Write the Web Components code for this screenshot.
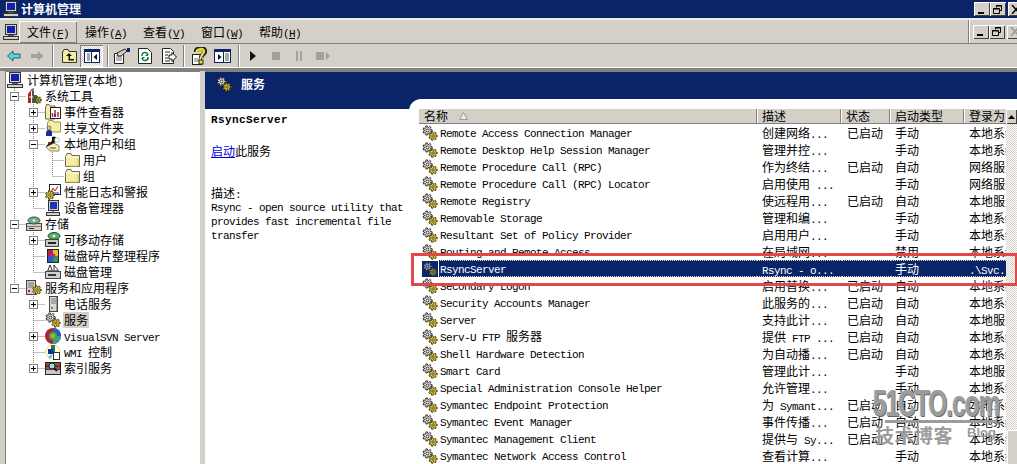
<!DOCTYPE html>
<html>
<head>
<meta charset="utf-8">
<style>
  html, body { margin: 0; height: 100%; overflow: hidden; background: #d4d0c8; }
</style>
</head>
<body>
<mmc-window>
  <title-bar slot="title" text="计算机管理"></title-bar>
  <menu-bar slot="menu"></menu-bar>
  <tool-bar slot="tools"></tool-bar>
  <tree-view slot="tree"></tree-view>
  <task-pad slot="pane"></task-pad>
</mmc-window>
<script>
const BASE_CSS = `
  :host, * { box-sizing: border-box; }
  .l { font: 11px "Liberation Mono", monospace; letter-spacing: -.6px; }
  svg { display: block; flex: none; }
`;
const CJK = '12px/14px "Noto Sans CJK SC", "Liberation Sans", sans-serif';

// latin runs get the narrow mono face, the rest stays CJK
const mix = (text) => text.replace(/[\x20-\x7e]+/g, (m) => `<span class="l">${m}</span>`);

const svg = (w, h, body) => `<svg width="${w}" height="${h}" viewBox="0 0 ${w} ${h}">${body}</svg>`;

// toothed wheel as one outline, so the teeth stay visible at 16px
const gearShape = (x, y, r, fill, edge) => {
  const pts = [];
  const teeth = 7;
  for (let k = 0; k < teeth * 2; k++) {
    const out = k % 2 === 0;
    for (const d of [-.17, .17]) {
      const a = (k * Math.PI) / teeth + d;
      const rad = out ? r + 1.1 : r - .4;
      pts.push(`${(x + rad * Math.cos(a)).toFixed(1)},${(y + rad * Math.sin(a)).toFixed(1)}`);
    }
  }
  return `<polygon points="${pts.join(' ')}" fill="${fill}" stroke="${edge}" stroke-width=".9"/>
    <circle cx="${x}" cy="${y}" r="${(r * .38).toFixed(1)}" fill="#fff" stroke="${edge}" stroke-width=".9"/>`;
};

const folderShape = `
  <path d="M1.5 4.5 V14.5 H15.5 V3.5 H8 L7 1.5 H3 L2 3.5 Z" fill="#f5ee9e" stroke="#6b6b5a"/>
  <path d="M2 5 H15" stroke="#fff"/><path d="M14 6 V14 H3" stroke="#cdbf5e" fill="none"/>`;

const ICONS = {
  gear: svg(16, 16, gearShape(5.5, 5.5, 3.6, '#dcdcdc', '#222') + gearShape(11, 11, 3.2, '#f2d431', '#3a3300')),
  computer: svg(16, 16, `
    <rect x="2.5" y=".5" width="11" height="10" fill="#d4d0c8" stroke="#333"/>
    <rect x="4" y="2" width="8" height="7" fill="#1020b0"/>
    <path d="M5 11.5H11" stroke="#555"/>
    <rect x=".5" y="12.5" width="15" height="3" fill="#d4d0c8" stroke="#333"/>`),
  tools: svg(16, 16, `
    <path d="M2 15V6L5 2V15Z" fill="#b02020"/><path d="M6 15V3H8V15Z" fill="#555"/>
    <path d="M8 15V7H11V15Z" fill="#208040"/><path d="M5 1L8 0V3H5Z" fill="#777"/>
    <path d="M3 9H7" stroke="#fff"/>` + gearShape(12, 12, 2.4, '#f2d431', '#3a3300')),
  folder: svg(16, 16, folderShape),
  event: svg(16, 16, `
    <path d="M.5 4V15H10V2H5L4 .5H1.5Z" fill="#f5ee9e" stroke="#6b6b5a"/>
    <rect x="5.5" y="3.5" width="10" height="11" fill="#fff" stroke="#222"/>
    <path d="M7.5 13V9M10 13V6M13 13V8" stroke="#b02020" stroke-width="1.4"/>
    <path d="M10 13V10" stroke="#1030a0" stroke-width="1.4"/>`),
  share: svg(16, 16, `
    <path d="M2.5 3V12H15.5V2H9L8 .5H4Z" fill="#f5ee9e" stroke="#999070"/>
    <path d="M1 13C1 10 4 10 5 10C6 10 7 11 7 13V16H1Z" fill="#1030a0"/>
    <circle cx="4" cy="8" r="2" fill="#f0c090" stroke="#333" stroke-width=".6"/>`),
  users: svg(16, 16, `
    <path d="M7 1C11 -1 12 3 11 5L7 8Z" fill="#111"/>
    <path d="M1 10L8 4L10 7L4 13Z" fill="#111"/>
    <path d="M1 11L5 15H14V10L9 7Z" fill="#eeeecc" stroke="#555" stroke-width=".7"/>
    <circle cx="12" cy="4" r="2.5" fill="#fff" stroke="#888" stroke-width=".5"/>
    <path d="M3 6L5 8M5 6L3 8" stroke="#b02020"/><path d="M5 12H11" stroke="#c0a020" stroke-width="2"/>`),
  perf: svg(16, 16, `
    <rect x="4.5" y=".5" width="11" height="10" fill="#fff" stroke="#222"/>
    <path d="M6 8L8 4L10 7L13 2" stroke="#b02020" fill="none"/><path d="M6 9H14" stroke="#1030a0"/>` +
    gearShape(5, 11, 3.4, '#f2d431', '#3a3300')),
  device: svg(16, 16, `
    <rect x="3.5" y=".5" width="10" height="10" fill="#d4d0c8" stroke="#333"/>
    <rect x="5" y="2" width="7" height="7" fill="#1038c0"/>
    <path d="M8 10.5V12" stroke="#333"/><rect x="1.5" y="12.5" width="13" height="3" fill="#d4d0c8" stroke="#333"/>`),
  storage: svg(16, 16, `
    <rect x=".5" y="7.5" width="15" height="7" fill="#d4d0c8" stroke="#444"/>
    <path d="M1 10.5H15" stroke="#777"/><rect x="3" y="12" width="5" height="1" fill="#222"/>
    <ellipse cx="8" cy="4.5" rx="6" ry="3.5" fill="#70b070" stroke="#446"/>
    <ellipse cx="8" cy="4.5" rx="1.5" ry="1" fill="#fff"/>`),
  removable: svg(16, 16, `
    <rect x=".5" y="7.5" width="13" height="7" fill="#c8c8c8" stroke="#444"/>
    <rect x="3" y="10" width="8" height="2" fill="#222"/>
    <ellipse cx="9" cy="4" rx="6" ry="3.5" fill="#58b058" stroke="#345"/>
    <ellipse cx="9" cy="4" rx="1.6" ry="1" fill="#fff"/>`),
  defrag: svg(16, 16, `
    <rect x="2" y="1" width="12" height="14" fill="#222"/>
    <rect x="3" y="2" width="5" height="6" fill="#c02040"/><rect x="8" y="2" width="5" height="6" fill="#e0c020"/>
    <rect x="3" y="8" width="5" height="6" fill="#2060d0"/><rect x="8" y="8" width="5" height="6" fill="#30a050"/>
    <circle cx="8" cy="8" r="2.4" fill="#a030a0"/>`),
  disk: svg(16, 16, `
    <rect x=".5" y="7.5" width="15" height="7" fill="#d0d0d0" stroke="#444"/>
    <rect x="3" y="10" width="8" height="2" fill="#333"/>
    <path d="M3 6L5 1L7 6M9 6V1L13 6" stroke="#333" fill="none"/><path d="M2 6.5H14" stroke="#777"/>`),
  apps: svg(16, 16, `
    <rect x=".5" y=".5" width="9" height="14" fill="#d4d0c8" stroke="#444"/>
    <path d="M2 3H8M2 5H8M2 7H8" stroke="#777"/><rect x="2" y="10" width="2" height="2" fill="#b02020"/>` +
    gearShape(11, 10, 3.3, '#f2d431', '#3a3300')),
  phone: svg(16, 16, `
    <rect x="4.5" y=".5" width="8" height="15" fill="#d8d8d8" stroke="#444"/>
    <path d="M6 3H11M6 5H11M6 7H11" stroke="#777"/><rect x="6" y="11" width="2" height="2" fill="#40a040"/>
    <path d="M11.5 1V15" stroke="#999"/>`),
  svn: svg(16, 16, `
    <circle cx="8" cy="8" r="8" fill="#b02030"/>
    <path d="M8 0A8 8 0 0 1 16 8H8Z" fill="#2060c0"/><path d="M16 8A8 8 0 0 1 8 16V8Z" fill="#30a0a0"/>
    <circle cx="8" cy="8" r="4" fill="#40a848"/><circle cx="8" cy="8" r="2" fill="#e0a030"/>`),
  wmi: svg(16, 16, `
    <circle cx="8" cy="8" r="7" fill="none" stroke="#e8e040"/>
    <rect x="6" y="1" width="4" height="8" fill="#208040"/><rect x="3" y="5" width="5" height="5" fill="#1030a0"/>
    <rect x="8.5" y="8.5" width="6" height="7" fill="#fff" stroke="#333"/>
    <path d="M4 14L7 11" stroke="#40c0e0" stroke-width="2"/>`),
  index: svg(16, 16, `
    <rect x=".5" y="2.5" width="15" height="12" fill="#a05030" stroke="#222"/>
    <path d="M1 6H15M1 10H15" stroke="#222"/><rect x="1" y="10" width="14" height="4" fill="#c8c8c8"/>
    <circle cx="7" cy="6" r="3" fill="#a0e0e0" stroke="#123"/><path d="M9 8L12 11" stroke="#123" stroke-width="2"/>`),
  back: svg(14, 12, `<path d="M.5 6L6 1V4H13V8H6V11Z" fill="#40e0e8" stroke="#333" stroke-width=".8"/>`),
  forward: svg(14, 12, `<path d="M13.5 6L8 1V4H1V8H8V11Z" fill="#a0a0a0"/>`),
  up: svg(16, 16, `
    <path d="M1.5 3.5V14.5H15.5V3.5H8L7 1.5H3L2 3.5Z" fill="#f5ee9e" stroke="#333"/>
    <path d="M8 5L11 8H9V11H13V12.5H7.5V8H5Z" fill="#111"/>`),
  tree: svg(16, 14, `
    <rect x=".5" y=".5" width="15" height="13" fill="#fff" stroke="#0a246a"/>
    <rect x="1" y="1" width="14" height="2" fill="#0a246a"/>
    <path d="M7.5 3V13" stroke="#0a246a"/><path d="M3 5H6M3 7H6M3 9H6M3 11H6" stroke="#555"/>
    <path d="M13 5V11L9.5 8Z" fill="#111"/>`),
  props: svg(18, 16, `
    <path d="M1.5 5.5H10.5V15.5H1.5Z" fill="#fff" stroke="#222"/>
    <path d="M3 8H9M3 10H9M3 12H9" stroke="#777"/>
    <path d="M4 5L12 1L14 3L8 8L5 8Z" fill="#d4d0c8" stroke="#222"/>
    <rect x="14" y="0" width="3" height="4" fill="#0a246a"/>`),
  refresh: svg(14, 16, `
    <path d="M.5 .5H9.5L13.5 4.5V15.5H.5Z" fill="#fff" stroke="#222"/>
    <path d="M4 8A3 3 0 0 1 10 7M10 9A3 3 0 0 1 4 10" stroke="#108040" fill="none" stroke-width="1.4"/>
    <path d="M10 5V8H7ZM4 12V9H7Z" fill="#108040"/>`),
  exportList: svg(15, 16, `
    <path d="M.5 .5H8.5L11.5 3.5V15.5H.5Z" fill="#fff" stroke="#222"/>
    <path d="M3 4H8M3 7H6M3 10H6M3 13H8" stroke="#222"/>
    <path d="M7 7H10V4.5L14.5 9L10 13.5V11H7Z" fill="#fff" stroke="#111"/>`),
  help: svg(15, 18, `
    <rect x=".5" y="7.5" width="9" height="10" fill="#fff" stroke="#222"/>
    <path d="M2 12H8M2 14H8" stroke="#777"/>
    <path d="M4 5C4 1 12 -1 13 4C13.500 7 9 7 9 11" stroke="#222" stroke-width="4.400" fill="none"/>
    <path d="M4.500 5C5 2 11.500 0.500 12 4C12.500 6.500 9 7 9 11" stroke="#f0e030" stroke-width="2.400" fill="none"/>
    <rect x="7" y="13" width="4" height="4" fill="#f0e030" stroke="#222"/>`),
  action: svg(17, 14, `
    <rect x=".5" y=".5" width="16" height="13" fill="#fff" stroke="#0a246a"/>
    <rect x="1" y="1" width="15" height="2" fill="#0a246a"/>
    <path d="M9.500 3V13" stroke="#0a246a"/><path d="M11 5H15M11 7H15M11 9H15M11 11H15" stroke="#555"/>
    <path d="M4 5V11L7.500 8Z" fill="#111"/>`),
  play: svg(8, 12, `<path d="M1 1V11L7 6Z" fill="#111"/>`),
  stop: svg(10, 10, `<rect x="1" y="1" width="8" height="8" fill="#a0a0a0"/>`),
  pause: svg(8, 10, `<path d="M1 0H3V10H1ZM5 0H7V10H5Z" fill="#a0a0a0"/>`),
  step: svg(15, 10, `<rect x="0" y="1" width="8" height="8" fill="#a0a0a0"/><path d="M10 1V9L14 5Z" fill="#a0a0a0"/>`),
};

class MmcIcon extends HTMLElement {
  connectedCallback() {
    if (this.shadowRoot) return;
    // white-space comes in from the rows, and would turn the markup's newlines into lines
    this.attachShadow({ mode: 'open' }).innerHTML = `
      <style>:host { display: block; flex: none; white-space: normal; width: max-content; } svg { display: block; }</style>
      ${ICONS[this.getAttribute('name')]}
    `;
  }
}

class WinButtons extends HTMLElement {
  connectedCallback() {
    if (this.shadowRoot) return;
    this.attachShadow({ mode: 'open' }).innerHTML = `
      <style>
        ${BASE_CSS}
        :host { display: flex; flex: none; }
        b {
          width: 16px; height: 14px; background: #d4d0c8; display: flex; align-items: center; justify-content: center;
          box-shadow: inset 1px 1px 0 #fff, inset -1px -1px 0 #404040;
        }
        b:last-child { margin-left: 2px; }
      </style>
      <b>${svg(10, 9, '<rect x="1" y="7" width="6" height="2" fill="#000"/>')}</b>
      <b>${svg(10, 9, '<path d="M3.500 2.500V.5H8.500V5.500H6.500M.5 3.500H6.500V8.500H.5Z" fill="none" stroke="#000"/><path d="M3 1H9M0 4H6" stroke="#000"/>')}</b>
      <b>${svg(10, 9, `<path d="M1 0L9 9M9 0L1 9" stroke="${this.hasAttribute('dim') ? '#9a9a9a' : '#000'}" stroke-width="1.500"/>`)}</b>
    `;
  }
}

class TitleBar extends HTMLElement {
  connectedCallback() {
    if (this.shadowRoot) return;
    this.attachShadow({ mode: 'open' }).innerHTML = `
      <style>
        ${BASE_CSS}
        :host {
          display: flex; align-items: center; height: 18px; background: #0a246a; color: #fff; flex: none;
          padding-left: 3px; font: bold ${CJK}; overflow: hidden;
        }
        span { margin-left: 2px; flex: 1; }
        win-buttons { margin-right: -7px; }
      </style>
      <mmc-icon name="computer"></mmc-icon>
      <span>${this.getAttribute('text')}</span>
      <win-buttons></win-buttons>
    `;
  }
}

class MenuBar extends HTMLElement {
  constructor() {
    super();
    const items = [['文件', 'F'], ['操作', 'A'], ['查看', 'V'], ['窗口', 'W'], ['帮助', 'H']];
    this.attachShadow({ mode: 'open' }).innerHTML = `
      <style>
        ${BASE_CSS}
        :host {
          display: flex; align-items: center; height: 26px; flex: none; overflow: hidden;
          background: #d4d0c8; font: ${CJK}; color: #000; padding-left: 3px;
          border-top: 2px solid #ecebe6; border-bottom: 1px solid #808080;
        }
        .m { width: 58px; height: 22px; display: block; line-height: 22px; padding-left: 8px; white-space: pre; flex: none; }
        .m:first-of-type { box-shadow: inset 1px 1px 0 #fff, inset -1px -1px 0 #808080; }
        .fill { flex: 1; }
        .grip { width: 1px; height: 23px; background: #fff; box-shadow: -1px 0 0 #808080; margin-right: 3px; }
        win-buttons { margin-right: -6px; }
      </style>
      <mmc-icon name="computer"></mmc-icon>
      ${items.map(([t, k]) => `<div class="m">${t}<span class="l">(<u>${k}</u>)</span></div>`).join('')}
      <div class="fill"></div>
      <div class="grip"></div>
      <win-buttons dim></win-buttons>
    `;
  }
}

class ToolBar extends HTMLElement {
  constructor() {
    super();
    // [icon, button width] groups, split by a separator
    const groups = [
      [['back', 24], ['forward', 22]],
      [['up', 23], ['tree', 23, true]],
      [['props', 19], ['refresh', 28], ['exportList', 20]],
      [['help', 22], ['action', 24]],
      [['play', 20], ['stop', 26], ['pause', 20], ['step', 28]],
    ];
    this.attachShadow({ mode: 'open' }).innerHTML = `
      <style>
        ${BASE_CSS}
        :host {
          display: flex; align-items: center; height: 27px; flex: none; background: #d4d0c8;
          padding: 0 0 1px 2px; border-bottom: 3px solid #808080; box-shadow: inset 0 -1px 0 #fff;
        }
        .b { height: 22px; display: flex; align-items: center; justify-content: center; flex: none; }
        .on {
          box-shadow: inset 1px 1px 0 #808080, inset -1px -1px 0 #fff;
          background: repeating-conic-gradient(#d4d0c8 0 25%, #fff 0 50%) 0 0 / 2px 2px;
        }
        .s { width: 2px; height: 22px; margin: 0 3px 0 4px; flex: none; border-left: 1px solid #808080; border-right: 1px solid #fff; }
      </style>
      ${groups.map((g) => g.map(([n, w, on]) =>
        `<div class="b ${on ? 'on' : ''}" style="width:${w}px"><mmc-icon name="${n}"></mmc-icon></div>`).join('')).join('<div class="s"></div>')}
    `;
  }
}

class TreeNode extends HTMLElement {
  connectedCallback() {
    if (this.shadowRoot) return;
    const depth = Number(this.getAttribute('depth'));
    const exp = this.getAttribute('exp');
    const sel = this.hasAttribute('selected');
    // depth 0 has no expander column at all
    const left = depth === 0 ? 1 : 4 + (depth - 1) * 19;
    const box = exp
      ? `<i>${svg(9, 9, `<rect x=".5" y=".5" width="8" height="8" fill="#fff" stroke="#808080"/><path d="M2 4.500H7${exp === 'plus' ? 'M4.500 2V7' : ''}" stroke="#000"/>`)}</i>`
      : '<i></i>';
    this.attachShadow({ mode: 'open' }).innerHTML = `
      <style>
        ${BASE_CSS}
        :host { display: flex; align-items: center; height: 16px; padding-left: ${left}px; white-space: pre; }
        i { width: 9px; margin-right: 7px; flex: none; }
        span.t { margin-left: ${depth === 0 ? 3 : 2}px; padding: 0 1px; ${sel ? 'background: #d4d0c8;' : ''} height: 16px; line-height: 16px; }
      </style>
      ${depth === 0 ? '' : box}
      <mmc-icon name="${this.getAttribute('icon')}"></mmc-icon>
      <span class="t">${mix(this.getAttribute('text'))}</span>
    `;
  }
}

class TreeView extends HTMLElement {
  constructor() {
    super();
    const nodes = [
      [0, '', 'computer', '计算机管理(本地)'],
      [1, 'minus', 'tools', '系统工具'],
      [2, 'plus', 'event', '事件查看器'],
      [2, 'plus', 'share', '共享文件夹'],
      [2, 'minus', 'users', '本地用户和组'],
      [3, '', 'folder', '用户'],
      [3, '', 'folder', '组'],
      [2, 'plus', 'perf', '性能日志和警报'],
      [2, '', 'device', '设备管理器'],
      [1, 'minus', 'storage', '存储'],
      [2, 'plus', 'removable', '可移动存储'],
      [2, '', 'defrag', '磁盘碎片整理程序'],
      [2, '', 'disk', '磁盘管理'],
      [1, 'minus', 'apps', '服务和应用程序'],
      [2, 'plus', 'phone', '电话服务'],
      [2, '', 'gear', '服务', true],
      [2, 'plus', 'svn', 'VisualSVN Server'],
      [2, '', 'wmi', 'WMI 控制'],
      [2, 'plus', 'index', '索引服务'],
    ];
    // dotted guides, in the coordinates of the rows box
    const dots = [
      'M8.500 16V216', 'M27.500 32V136', 'M27.500 160V200', 'M27.500 224V296', 'M46.500 80V104',
      ...nodes.flatMap(([d], k) => {
        if (d === 0) return [];
        const x = 8.5 + (d - 1) * 19;
        return [`M${x} ${8.5 + 16 * k}H${x + 11}`];
      }),
    ].join('');
    this.attachShadow({ mode: 'open' }).innerHTML = `
      <style>
        ${BASE_CSS}
        :host {
          display: block; width: 195px; margin-left: 5px; background: #fff; flex: none; overflow: hidden; height: 100%;
          border-left: 1px solid #808080; border-top: 1px solid #808080; color: #000; font: ${CJK};
        }
        .rows { position: relative; }
        .rows > svg { position: absolute; left: 0; top: 0; }
        tree-node { position: relative; }
      </style>
      <div class="rows">
        ${svg(195, 320, `<path d="${dots}" stroke="#808080" stroke-dasharray="1 1" fill="none"/>`)}
        ${nodes.map(([d, e, i, t, s]) =>
          `<tree-node depth="${d}" ${e ? `exp="${e}"` : ''} icon="${i}" text="${t}" ${s ? 'selected' : ''}></tree-node>`).join('')}
      </div>
    `;
  }
}

class ServiceRow extends HTMLElement {
  connectedCallback() {
    if (this.shadowRoot) return;
    const [name, desc, state, start, logon] = JSON.parse(this.getAttribute('cells'));
    const dots = 'repeating-linear-gradient(90deg, #e0dcb0 0 1px, #0a246a 1px 2px)';
    this.attachShadow({ mode: 'open' }).innerHTML = `
      <style>
        ${BASE_CSS}
        :host {
          display: grid; grid-template-columns: 338px 85px 49px 72px 43px; height: 17px; flex: none;
          font: ${CJK}; color: #000; white-space: pre;
        }
        div { overflow: hidden; height: 17px; line-height: 17px; padding-left: 5px; }
        .name { padding-left: 3px; display: flex; align-items: center; gap: 2px; }
        .name span { margin-top: -2px; }
        .state { padding-left: 5px; }
        .start { padding-left: 4px; }
        .logon { padding-left: 6px; }
        :host([selected]) { color: #fff; }
        :host([selected]) .sel, :host([selected]) .name > span {
          background: ${dots} top / 100% 1px no-repeat, ${dots} bottom / 100% 1px no-repeat, #0a246a;
        }
        :host([selected]) .name { background: linear-gradient(90deg, #fff 20px, #0a246a 20px); }
        :host([selected]) .name > span { margin-top: 0; flex: 1; height: 17px; line-height: 15px; }
        :host([selected]) .name > span span { margin: 0; }
        :host([selected]) .ic { background: #0a246a; }
        :host([selected]) .ic mmc-icon { opacity: .62; }
        .ic { padding: 0; height: 16px; flex: none; }
      </style>
      <div class="name"><div class="ic"><mmc-icon name="gear"></mmc-icon></div><span>${mix(name)}</span></div>
      <div class="sel">${mix(desc)}</div>
      <div class="sel state">${state}</div>
      <div class="sel start">${start}</div>
      <div class="sel logon">${mix(logon)}</div>
    `;
  }
}

class ServiceList extends HTMLElement {
  constructor() {
    super();
    const rows = [
      ['Remote Access Connection Manager', '创建网络...', '已启动', '手动', '本地系统'],
      ['Remote Desktop Help Session Manager', '管理并控...', '', '手动', '本地系统'],
      ['Remote Procedure Call (RPC)', '作为终结...', '已启动', '自动', '网络服务'],
      ['Remote Procedure Call (RPC) Locator', '启用使用 ...', '', '手动', '网络服务'],
      ['Remote Registry', '使远程用...', '已启动', '自动', '本地服务'],
      ['Removable Storage', '管理和编...', '', '手动', '本地系统'],
      ['Resultant Set of Policy Provider', '启用用户...', '', '手动', '本地系统'],
      ['Routing and Remote Access', '在局域网...', '', '禁用', '本地系统'],
      ['RsyncServer', 'Rsync - o...', '', '手动', '.\\Svc...'],
      ['Secondary Logon', '启用替换...', '已启动', '自动', '本地系统'],
      ['Security Accounts Manager', '此服务的...', '已启动', '自动', '本地系统'],
      ['Server', '支持此计...', '已启动', '自动', '本地服务'],
      ['Serv-U FTP 服务器', '提供 FTP ...', '已启动', '自动', '本地系统'],
      ['Shell Hardware Detection', '为自动播...', '已启动', '自动', '本地系统'],
      ['Smart Card', '管理此计...', '', '手动', '本地服务'],
      ['Special Administration Console Helper', '允许管理...', '', '手动', '本地系统'],
      ['Symantec Endpoint Protection', '为 Symant...', '已启动', '自动', '本地系统'],
      ['Symantec Event Manager', '事件传播...', '已启动', '自动', '本地系统'],
      ['Symantec Management Client', '提供与 Sy...', '已启动', '自动', '本地系统'],
      ['Symantec Network Access Control', '查看计算...', '', '手动', '本地系统'],
    ];
    const heads = ['名称', '描述', '状态', '启动类型', '登录为'];
    this.attachShadow({ mode: 'open' }).innerHTML = `
      <style>
        ${BASE_CSS}
        :host { display: flex; height: 100%; font: ${CJK}; overflow: hidden; background: #fff; }
        .list { width: 587px; flex: none; display: flex; flex-direction: column; overflow: hidden; }
        .head {
          display: grid; grid-template-columns: 338px 84px 49px 74px 42px; height: 15px; flex: none;
          background: #d4d0c8; border-bottom: 1px solid #808080;
        }
        .head div {
          padding-left: 5px; line-height: 14px; height: 14px; display: flex; align-items: center; gap: 11px;
          border-right: 1px solid #808080; box-shadow: 1px 0 0 #fff; white-space: pre;
        }
        .head div:last-child { border-right: 0; box-shadow: none; }
        .bar { flex: 1; background: repeating-conic-gradient(#d4d0c8 0 25%, #fff 0 50%) 0 0 / 2px 2px; display: flex; flex-direction: column; }
        .btn {
          height: 15px; flex: none; background: #d4d0c8; box-shadow: inset 1px 1px 0 #fff, inset -1px -1px 0 #404040;
          display: flex; align-items: center; justify-content: center;
        }
        .gap { flex: 1; }
        .thumb { height: 34px; flex: none; margin-left: 1px; background: #d4d0c8; box-shadow: inset 1px 1px 0 #fff; }
      </style>
      <div class="list">
        <div class="head">
          ${heads.map((h, i) => `<div>${h}${i === 0 ? svg(9, 8, '<path d="M4.500 .5L8.500 7.500H.5Z" fill="#ecebe6" stroke="#9a9a9a"/>') : ''}</div>`).join('')}
        </div>
        ${rows.map((r) => `<service-row ${r[0] === 'RsyncServer' ? 'selected' : ''} cells='${JSON.stringify(r).replace(/'/g, '&#39;')}'></service-row>`).join('')}
      </div>
      <div class="bar">
        <div class="btn">${svg(7, 4, '<path d="M3.500 0L7 4H0Z" fill="#000"/>')}</div>
        <div class="gap"></div>
        <div class="thumb"></div>
      </div>
    `;
  }
}

class TaskPad extends HTMLElement {
  constructor() {
    super();
    this.attachShadow({ mode: 'open' }).innerHTML = `
      <style>
        ${BASE_CSS}
        :host {
          display: flex; flex-direction: column; flex: 1; min-width: 0; height: 100%; background: #0a246a; position: relative;
          font: ${CJK}; color: #000; overflow: hidden; border-top: 1px solid #808080;
        }
        .banner { height: 27px; flex: none; display: flex; align-items: center; padding: 0 0 3px 11px; color: #fff; font-weight: bold; }
        .banner span { margin-left: 9px; }
        .body { flex: 1; display: flex; min-height: 0; }
        .about { width: 204px; flex: none; margin-top: 10px; background: #fff; padding: 4px 0 0 6px; }
        .about > .l { display: block; line-height: 14px; white-space: pre; }
        .about .n { font-weight: bold; letter-spacing: .4px; }
        .start { margin-top: 17px; line-height: 14px; }
        a { color: #0000e0; text-decoration: underline; }
        .cap { margin-top: 28px; line-height: 14px; }
        .side { flex: 1; min-width: 0; background: #fff; border-top-left-radius: 12px; padding: 10px 0 0 10px; }
        .mark {
          position: absolute; left: 206px; top: 181px; width: 606px; height: 33px;
          border: 3px solid #e2474a; border-right-width: 2px;
        }
        .wm { position: absolute; left: 668px; top: 320px; width: 130px; height: 56px; color: #9c9c9c; }
        .wm p { margin: 0; position: absolute; white-space: pre; }
        .wm .a { left: 0; top: -4px; font: bold 36px/32px "Liberation Sans", sans-serif; letter-spacing: -1.500px; text-shadow: 1px 1px 0 #666, -1px 0 0 #ccc; transform: scaleX(.68); transform-origin: left; }
        .wm .r { left: 12px; top: 28px; width: 112px; height: 3px; background: #9c9c9c; }
        .wm .b { left: 2px; top: 30px; font: bold 19px/26px "Noto Sans CJK SC", sans-serif; letter-spacing: .5px; }
        .wm .c { left: 94px; top: 33px; font: bold 13px/15px "Liberation Sans", sans-serif; }
      </style>
      <div class="banner"><mmc-icon name="gear"></mmc-icon><span>服务</span></div>
      <div class="body">
        <div class="about">
          <span class="l n">RsyncServer</span>
          <div class="start"><a>启动</a>此服务</div>
          <div class="cap">描述<span class="l">:</span></div>
          <span class="l">Rsync - open source utility that</span>
          <span class="l">provides fast incremental file</span>
          <span class="l">transfer</span>
        </div>
        <div class="side"><service-list></service-list></div>
      </div>
      <div class="mark"></div>
      <div class="wm">
        <p class="a">51CTO.com</p><p class="r"></p><p class="b">技术博客</p><p class="c">Blog</p>
      </div>
    `;
  }
}

class MmcWindow extends HTMLElement {
  constructor() {
    super();
    this.attachShadow({ mode: 'open' }).innerHTML = `
      <style>
        :host { display: flex; flex-direction: column; height: 464px; width: 1017px; overflow: hidden; background: #d4d0c8; }
        .main { flex: 1; display: flex; min-height: 0; gap: 5px; }
        .main slot { display: contents; }
      </style>
      <slot name="title"></slot>
      <slot name="menu"></slot>
      <slot name="tools"></slot>
      <div class="main">
        <slot name="tree"></slot>
        <slot name="pane"></slot>
      </div>
    `;
  }
}

customElements.define('mmc-icon', MmcIcon);
customElements.define('win-buttons', WinButtons);
customElements.define('title-bar', TitleBar);
customElements.define('menu-bar', MenuBar);
customElements.define('tool-bar', ToolBar);
customElements.define('tree-node', TreeNode);
customElements.define('tree-view', TreeView);
customElements.define('service-row', ServiceRow);
customElements.define('service-list', ServiceList);
customElements.define('task-pad', TaskPad);
customElements.define('mmc-window', MmcWindow);
</script>
</body>
</html>
